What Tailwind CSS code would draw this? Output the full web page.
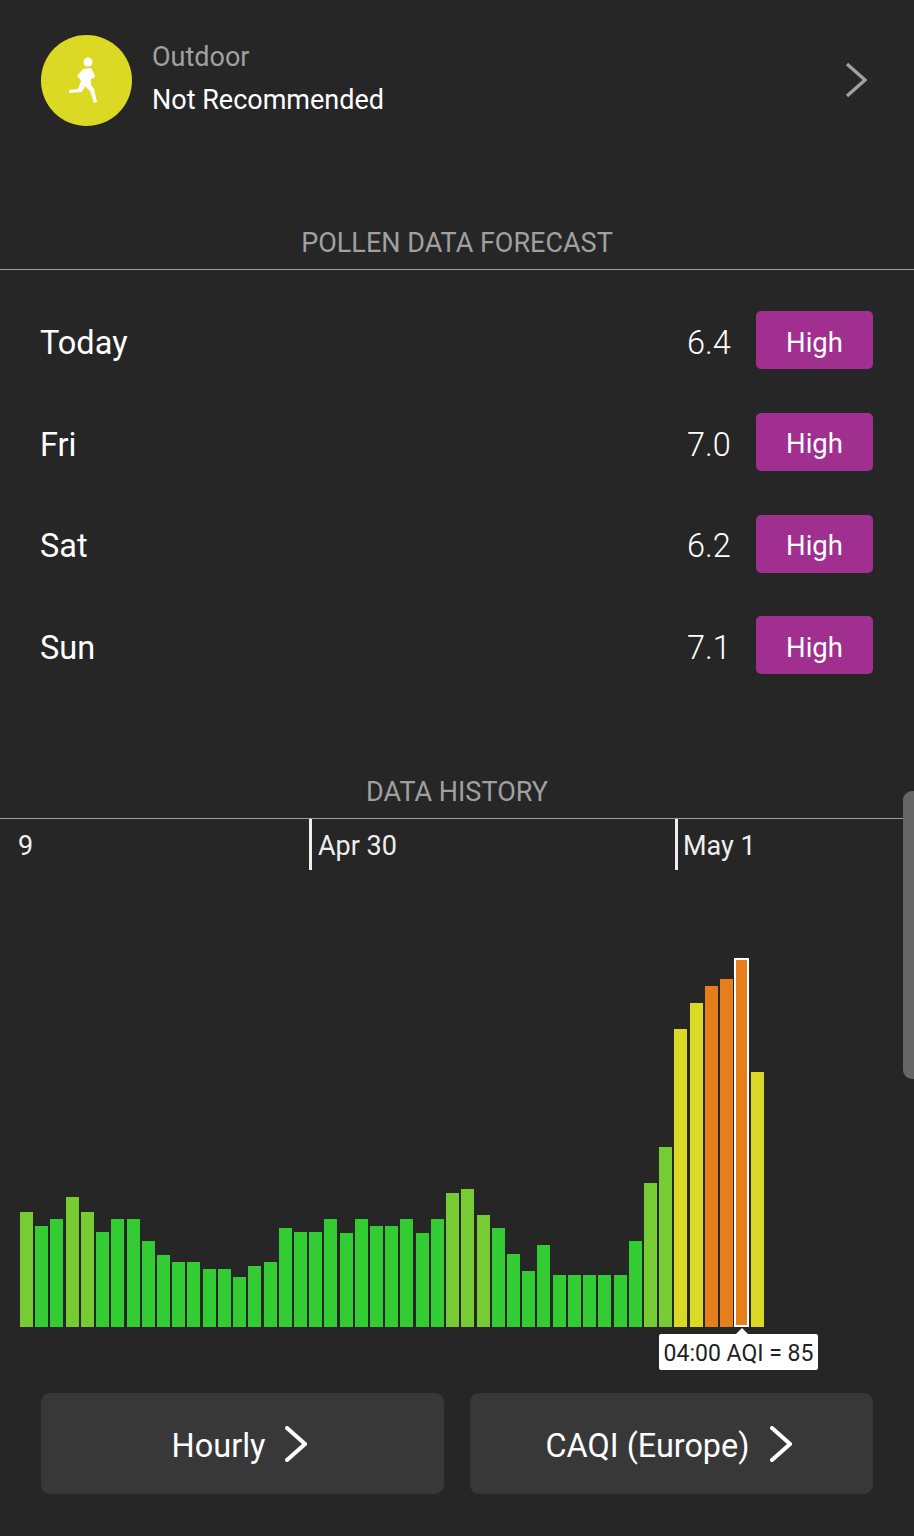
<!DOCTYPE html>
<html lang="en">
<head>
  <meta charset="utf-8"/>
  <title>Air quality</title>
  <script src="https://cdn.jsdelivr.net/npm/@tailwindcss/browser@4"></script>
</head>
<body class="bg-[#262626] font-['Roboto',sans-serif] text-white">
  <div class="relative w-[914px] h-[1536px] overflow-hidden">
    <!-- Outdoor -->
    <div class="flex items-center h-[161px] pl-[41px] pr-[47px]">
      <div class="w-[91px] h-[91px] rounded-full bg-[#dbd924]">
        <svg width="91" height="91" viewBox="0 0 91 91" fill="#fff">
          <circle cx="47" cy="27" r="4.5"/>
          <path d="M42 34 L50 33 L54 41 L53 43 L50 44 L50 50 L53 54 L56 67 L53 68 L49 56 L44 51 L41 57 L28 58 L28 55 L37 54 L40 46 L39 44 L36 41 Z"/>
        </svg>
      </div>
      <div class="ml-[20px] flex-1 mb-[4px]">
        <div class="text-[27px] leading-[43px] text-[#a0a0a0]">Outdoor</div>
        <div class="text-[27px] leading-[43px] text-white">Not Recommended</div>
      </div>
      <svg class="mb-[2px]" width="22" height="36" viewBox="0 0 22 36" fill="none" stroke="#a0a0a0" stroke-width="3.4">
        <path d="M2 2 L20 18 L2 34"/>
      </svg>
    </div>

    <!-- Pollen forecast -->
    <div class="mt-[61px] h-[48px] border-b border-[#a0a0a0] text-center text-[27px] leading-[42px] text-[#a0a0a0]">POLLEN DATA FORECAST</div>
    <div class="mt-[22px] pl-[40px] pr-[41px]">
      <div class="flex items-center h-[101.67px]"><span class="flex-1 text-[32.5px] pt-[1px]">Today</span><span class="w-[69px] text-[32.5px] font-light pt-[1px]">6.4</span><span class="w-[117px] h-[58px] mb-[5px] rounded-[5px] bg-[#a02f90] flex items-center justify-center text-[27.5px] pt-[4px]">High</span></div>
      <div class="flex items-center h-[101.67px]"><span class="flex-1 text-[32.5px] pt-[1px]">Fri</span><span class="w-[69px] text-[32.5px] font-light pt-[1px]">7.0</span><span class="w-[117px] h-[58px] mb-[5px] rounded-[5px] bg-[#a02f90] flex items-center justify-center text-[27.5px] pt-[4px]">High</span></div>
      <div class="flex items-center h-[101.67px]"><span class="flex-1 text-[32.5px] pt-[1px]">Sat</span><span class="w-[69px] text-[32.5px] font-light pt-[1px]">6.2</span><span class="w-[117px] h-[58px] mb-[5px] rounded-[5px] bg-[#a02f90] flex items-center justify-center text-[27.5px] pt-[4px]">High</span></div>
      <div class="flex items-center h-[101.67px]"><span class="flex-1 text-[32.5px] pt-[1px]">Sun</span><span class="w-[69px] text-[32.5px] font-light pt-[1px]">7.1</span><span class="w-[117px] h-[58px] mb-[5px] rounded-[5px] bg-[#a02f90] flex items-center justify-center text-[27.5px] pt-[4px]">High</span></div>
    </div>

    <!-- Data history -->
    <div class="mt-[72.5px] h-[48px] border-b border-[#a0a0a0] text-center text-[27px] leading-[42px] text-[#a0a0a0]">DATA HISTORY</div>
    <div class="relative h-[507.5px]">
      <div class="absolute left-[18px] top-[9px] text-[27px] leading-[36px] text-[#eee]">9</div>
      <div class="absolute left-[309px] top-0 w-[3px] h-[51px] bg-[#eee]"></div>
      <div class="absolute left-[318px] top-[9px] text-[27px] leading-[36px] text-[#eee]">Apr 30</div>
      <div class="absolute left-[675px] top-0 w-[3px] h-[51px] bg-[#eee]"></div>
      <div class="absolute left-[683px] top-[9px] text-[27px] leading-[36px] text-[#eee]">May 1</div>
      <div id="bars" class="flex items-end gap-[2.22px] pl-[20px] h-[507.5px]"></div>
      <div class="absolute left-[659px] top-[515px] w-[159px] h-[36px] bg-white rounded-[2px] text-[#222] text-[23px] leading-[40px] text-center">04:00 AQI = 85</div>
      <div class="absolute left-[736px] top-[509px] w-0 h-0 border-x-[6px] border-x-transparent border-b-[6px] border-b-white"></div>
    </div>

    <!-- Buttons -->
    <div class="mt-[66px] pl-[41px] pr-[41px] flex gap-[26px]">
      <div class="flex-1 h-[101px] pr-[6px] rounded-[9px] bg-[#383838] flex items-center justify-center gap-[20px]">
        <span class="text-[32.5px] pt-[7px]">Hourly</span>
        <svg class="mt-[2px]" width="22" height="36" viewBox="0 0 22 36" fill="none" stroke="#fff" stroke-width="4" stroke-linecap="round"><path d="M2 2 L20 18 L2 34"/></svg>
      </div>
      <div class="flex-1 h-[101px] pr-[6px] rounded-[9px] bg-[#383838] flex items-center justify-center gap-[20px]">
        <span class="text-[32.4px] pt-[7px]">CAQI (Europe)</span>
        <svg class="mt-[2px]" width="22" height="36" viewBox="0 0 22 36" fill="none" stroke="#fff" stroke-width="4" stroke-linecap="round"><path d="M2 2 L20 18 L2 34"/></svg>
      </div>
    </div>

    <!-- Scroll handle -->
    <div class="absolute left-[903px] top-[791px] w-[11px] h-[288px] rounded-l-[9px] bg-[#666]"></div>
  </div>

  <script>
    // [height, colour] per hour
    const colors = {
      g: 'bg-[#33cc33]',
      l: 'bg-[#77cc33]',
      y: 'bg-[#d9d926]',
      o: 'bg-[#e67e1a]',
      s: 'bg-[#e67e1a] outline-2 -outline-offset-1 outline-white mb-[1px]'
    };
    const data = [
      [115,'l'],[101,'g'],[108,'g'],[130,'l'],[115,'l'],[95,'g'],[108,'g'],[108,'g'],[86,'g'],[72,'g'],
      [65,'g'],[65,'g'],[58,'g'],[58,'g'],[50,'g'],[61,'g'],[65,'g'],[99,'g'],[95,'g'],[95,'g'],
      [108,'g'],[94,'g'],[108,'g'],[101,'g'],[101,'g'],[108,'g'],[94,'g'],[108,'g'],[134,'l'],[138,'l'],
      [112,'l'],[99,'g'],[73,'g'],[56,'g'],[82,'g'],[52,'g'],[52,'g'],[52,'g'],[52,'g'],[52,'g'],
      [86,'g'],[144,'l'],[180,'l'],[298,'y'],[324,'y'],[341,'o'],[348,'o'],[367,'s'],[255,'y']
    ];
    const bars = document.getElementById('bars');
    data.forEach(([h, c]) => {
      const bar = document.createElement('div');
      bar.className = 'w-[13px] shrink-0 ' + colors[c];
      bar.style.height = h + 'px';
      bars.appendChild(bar);
    });
  </script>
</body>
</html>
